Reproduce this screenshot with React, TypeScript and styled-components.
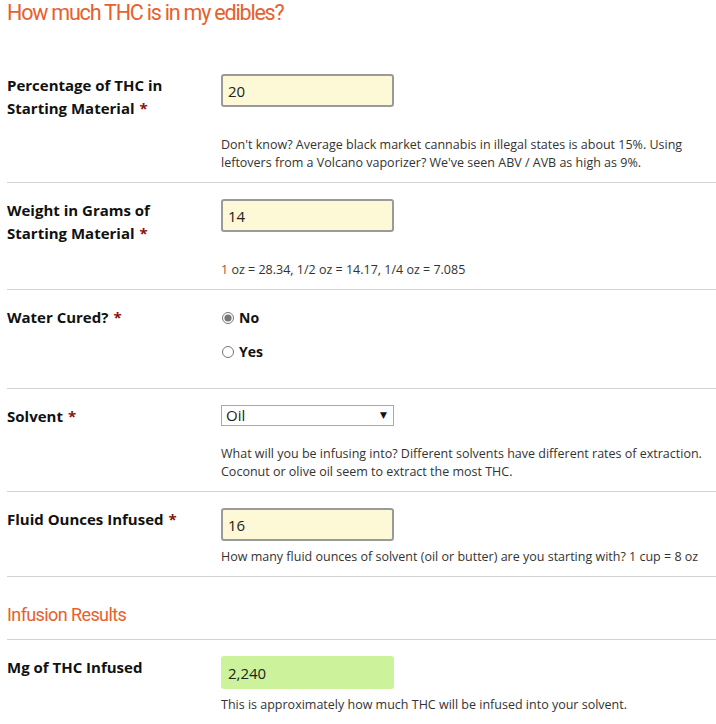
import { FC } from "react";
import styled, { createGlobalStyle } from "styled-components";

const colors = {
  orange: "#e8602c",
  line: "#d3d3d3",
  text: "#111",
  help: "#333",
  star: "#8b1010",
};

const GlobalStyle = createGlobalStyle`
  html, body {
    margin: 0;
    padding: 0;
    background: #fff;
  }
  body {
    font-family: "Open Sans", "DejaVu Sans", sans-serif;
    color: ${colors.text};
  }
`;

type FieldRowProps = {
  label: string;
  required?: boolean;
  help?: React.ReactNode;
  helpGap?: number;
  padBottom?: number;
  children: React.ReactNode;
};

const FieldRow: FC<FieldRowProps> = ({
  label,
  required,
  help,
  helpGap = 29,
  padBottom = 10,
  children,
}) => (
  <Row $padBottom={padBottom}>
    <Label>
      {label}
      {required && <Star>*</Star>}
    </Label>
    <Field>
      {children}
      {help && <Help $gap={helpGap}>{help}</Help>}
    </Field>
  </Row>
);

const App = () => {
  return (
    <>
      <GlobalStyle />
      <Page>
        <Title>How much THC is in my edibles?</Title>
        <Form>
          <FieldRow
            label="Percentage of THC in Starting Material"
            required
            help="Don't know? Average black market cannabis in illegal states is about 15%. Using leftovers from a Volcano vaporizer? We've seen ABV / AVB as high as 9%."
          >
            <TextInput defaultValue="20" />
          </FieldRow>
          <FieldRow
            label="Weight in Grams of Starting Material"
            required
            help={
              <>
                <Accent>1</Accent> oz = 28.34, 1/2 oz = 14.17, 1/4 oz = 7.085
              </>
            }
          >
            <TextInput defaultValue="14" />
          </FieldRow>
          <FieldRow label="Water Cured?" required padBottom={25}>
            <RadioList>
              <RadioItem>
                <Radio type="radio" name="cured" defaultChecked />
                No
              </RadioItem>
              <RadioItem>
                <Radio type="radio" name="cured" />
                Yes
              </RadioItem>
            </RadioList>
          </FieldRow>
          <FieldRow
            label="Solvent"
            required
            helpGap={19}
            help="What will you be infusing into? Different solvents have different rates of extraction. Coconut or olive oil seem to extract the most THC."
          >
            <SelectWrap>
              <Select defaultValue="oil">
                <option value="oil">Oil</option>
                <option value="butter">Butter</option>
                <option value="alcohol">Alcohol</option>
              </Select>
            </SelectWrap>
          </FieldRow>
          <FieldRow
            label="Fluid Ounces Infused"
            required
            helpGap={7}
            help="How many fluid ounces of solvent (oil or butter) are you starting with? 1 cup = 8 oz"
          >
            <TextInput defaultValue="16" />
          </FieldRow>
        </Form>
        <SubTitle>Infusion Results</SubTitle>
        <Form>
          <FieldRow
            label="Mg of THC Infused"
            helpGap={7}
            help="This is approximately how much THC will be infused into your solvent."
          >
            <Result>2,240</Result>
          </FieldRow>
        </Form>
      </Page>
    </>
  );
};

const Page = styled.div`
  padding-left: 7px;
  width: 709px;
  overflow: hidden;
`;

const Title = styled.h1`
  font-family: "Roboto", "Liberation Sans", sans-serif;
  font-weight: 400;
  font-size: 21.5px;
  letter-spacing: -1.2px;
  line-height: 26px;
  color: ${colors.orange};
  margin: 0 0 32px;
`;

const SubTitle = styled.h2`
  font-family: "Roboto", "Liberation Sans", sans-serif;
  font-weight: 400;
  font-size: 18px;
  letter-spacing: -0.6px;
  line-height: 24px;
  color: ${colors.orange};
  margin: 0;
  padding: 26px 0 12px;
  border-bottom: 1px solid ${colors.line};
`;

const Form = styled.div`
  display: flex;
  flex-direction: column;
`;

const Row = styled.div<{ $padBottom: number }>`
  display: grid;
  grid-template-columns: 214px 1fr;
  padding: 16px 0 ${({ $padBottom }) => $padBottom}px;
  border-bottom: 1px solid ${colors.line};
`;

const Label = styled.div`
  font-weight: 700;
  font-size: 15px;
  line-height: 23px;
  padding-right: 36px;
`;

const Star = styled.span`
  color: ${colors.star};
  margin-left: 5px;
`;

const Field = styled.div`
  display: flex;
  flex-direction: column;
  align-items: flex-start;
`;

const TextInput = styled.input`
  box-sizing: border-box;
  width: 173px;
  height: 33px;
  padding: 0 5px;
  border: 2px solid #9a9a9a;
  border-radius: 3px;
  background: #fdf9d6;
  font-family: "Open Sans", sans-serif;
  font-size: 15px;
  color: #222;
  outline: none;
`;

const Result = styled.div`
  box-sizing: border-box;
  width: 173px;
  height: 33px;
  padding: 0 7px;
  display: flex;
  align-items: center;
  border-radius: 3px;
  background: #ccf29b;
  font-size: 15px;
  color: #222;
`;

const Help = styled.p<{ $gap: number }>`
  margin: ${({ $gap }) => $gap}px 0 0;
  font-size: 12.5px;
  line-height: 18px;
  color: ${colors.help};
  max-width: 483px;
`;

const Accent = styled.span`
  color: #a0522d;
`;

const RadioList = styled.div`
  display: flex;
  flex-direction: column;
  gap: 11px;
`;

const RadioItem = styled.label`
  display: flex;
  align-items: center;
  gap: 5px;
  font-weight: 700;
  font-size: 14px;
  line-height: 23px;
`;

const Radio = styled.input`
  width: 12px;
  height: 12px;
  margin: 0 0 0 1px;
  accent-color: #777;
`;

const SelectWrap = styled.div`
  position: relative;
  width: 173px;
  height: 21px;

  &::after {
    content: "▼";
    position: absolute;
    right: 7px;
    top: 5px;
    font-size: 9px;
    line-height: 10px;
    color: #111;
    pointer-events: none;
  }
`;

const Select = styled.select`
  appearance: none;
  box-sizing: border-box;
  display: block;
  width: 173px;
  height: 21px;
  margin: 0;
  border: 1px solid #a9a9a9;
  border-radius: 0;
  background: #fff;
  font-family: "Open Sans", sans-serif;
  font-size: 15px;
  line-height: 19px;
  color: #222;
  padding: 0 4px;
`;

export default App;
